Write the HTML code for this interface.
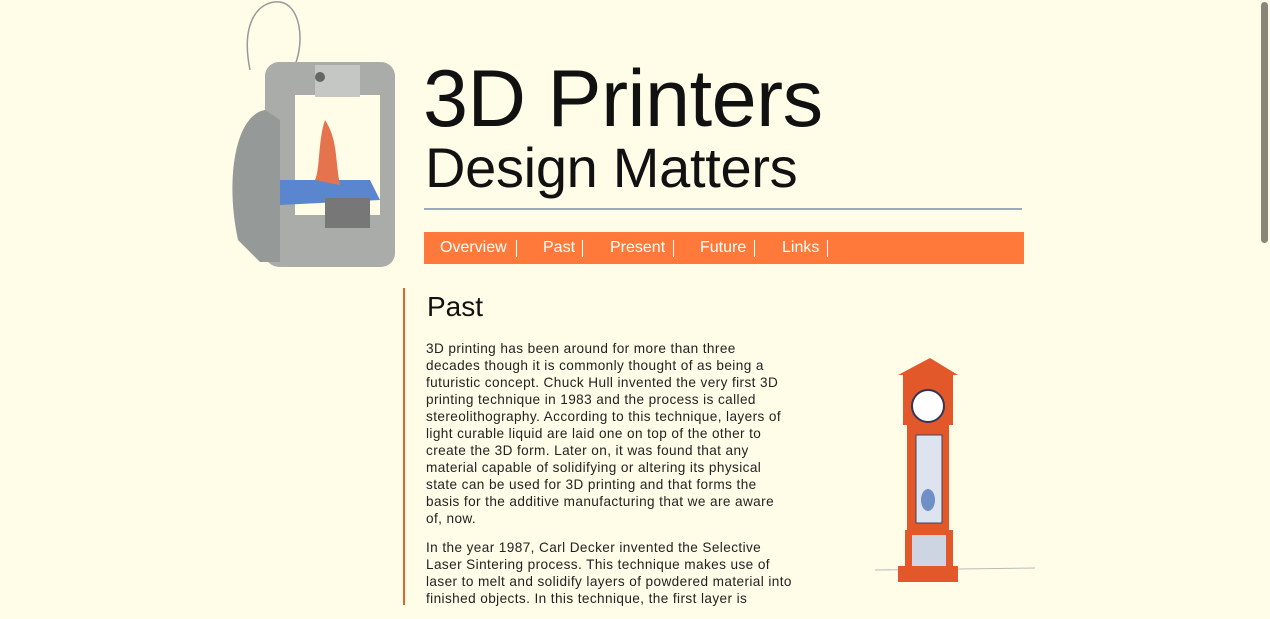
<!DOCTYPE html>
<html><head><style>
body{margin:0;background:#fffde8;font-family:"Liberation Sans",sans-serif;width:1270px;height:605px;overflow:hidden;position:relative}
.a{position:absolute}
h1{position:absolute;left:423px;top:54px;margin:0;font-weight:normal;font-size:81px;line-height:90px;color:#111;letter-spacing:-0.5px}
.sub{position:absolute;left:425px;top:136px;font-size:56px;line-height:64px;color:#111;letter-spacing:-0.3px}
.nav{position:absolute;left:424px;top:232px;width:600px;height:32px;background:#ff7a3a;color:#fff;font-size:16px;line-height:32px}
.nav span{position:absolute;top:0}
.nav i{position:absolute;top:8px;width:1px;height:17px;background:#fff}
p{margin:0 0 12px 0;white-space:nowrap}
</style></head><body>
<svg class="a" style="left:220px;top:0" width="190" height="280" viewBox="0 0 190 280">
<path d="M30 70 C20 20 40 0 60 2 C80 5 85 40 75 65" fill="none" stroke="#999" stroke-width="1.5"/>
<rect x="45" y="62" width="130" height="205" rx="14" fill="#a9aca8"/>
<path d="M45 110 C15 115 5 180 18 240 L40 262 L60 262 L60 120Z" fill="#959997"/>
<rect x="75" y="95" width="85" height="120" fill="#fffde8"/>
<path d="M60 180 L150 180 L160 200 L60 205Z" fill="#5a86cf"/>
<path d="M105 120 C98 140 100 170 95 180 L120 185 C115 160 118 140 105 120Z" fill="#e5744e"/>
<rect x="105" y="198" width="45" height="30" fill="#777"/>
<rect x="95" y="65" width="45" height="32" fill="#c5c7c4"/>
<circle cx="100" cy="77" r="5" fill="#666"/>
</svg>
<h1>3D Printers</h1>
<div class="sub">Design Matters</div>
<div class="a" style="left:424px;top:208px;width:598px;height:2px;background:#9aaabb"></div>
<div class="nav">
<span style="left:16px">Overview</span><i style="left:92px"></i>
<span style="left:119px">Past</span><i style="left:158px"></i>
<span style="left:186px">Present</span><i style="left:249px"></i>
<span style="left:276px">Future</span><i style="left:330px"></i>
<span style="left:358px">Links</span><i style="left:403px"></i>
</div>
<div class="a" style="left:403px;top:288px;width:2px;height:317px;background:#e0662e"></div>
<div class="a" style="left:427px;top:291px;font-size:28px;color:#111">Past</div>
<div class="a" style="left:426px;top:340px;width:380px;font-size:13.6px;letter-spacing:0.4px;line-height:17px;color:#222">
<p>3D printing has been around for more than three<br>decades though it is commonly thought of as being a<br>futuristic concept. Chuck Hull invented the very first 3D<br>printing technique in 1983 and the process is called<br>stereolithography. According to this technique, layers of<br>light curable liquid are laid one on top of the other to<br>create the 3D form. Later on, it was found that any<br>material capable of solidifying or altering its physical<br>state can be used for 3D printing and that forms the<br>basis for the additive manufacturing that we are aware<br>of, now.</p>
<p>In the year 1987, Carl Decker invented the Selective<br>Laser Sintering process. This technique makes use of<br>laser to melt and solidify layers of powdered material into<br>finished objects. In this technique, the first layer is</p>
</div>
<svg class="a" style="left:870px;top:340px" width="180" height="265" viewBox="0 0 180 265">
<line x1="5" y1="230" x2="165" y2="228" stroke="#bbb"/>
<path d="M28 35 L60 18 L88 35Z" fill="#e3582a"/>
<rect x="33" y="35" width="50" height="50" fill="#e3582a"/>
<circle cx="58" cy="66" r="16" fill="#fff" stroke="#335" stroke-width="2"/>
<rect x="37" y="85" width="42" height="105" fill="#e3582a"/>
<rect x="46" y="95" width="26" height="88" fill="#dde4f0" stroke="#445"/>
<ellipse cx="58" cy="160" rx="7" ry="11" fill="#6f8fc7"/>
<rect x="35" y="190" width="48" height="40" fill="#e3582a"/>
<rect x="42" y="195" width="34" height="32" fill="#cdd5e3"/>
<rect x="28" y="226" width="60" height="16" fill="#e3582a"/>
</svg>
<div class="a" style="left:1261px;top:2px;width:7px;height:241px;border-radius:4px;background:#8a8578"></div>
</body></html>
